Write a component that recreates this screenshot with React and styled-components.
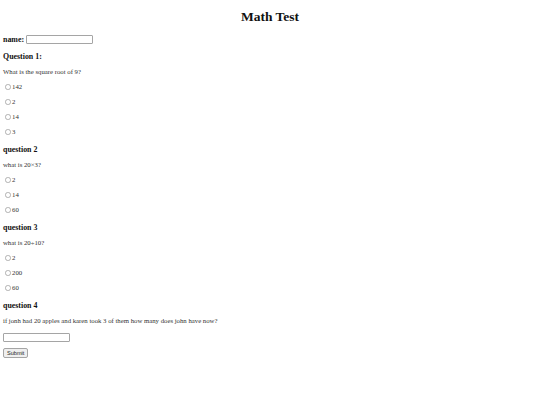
import React from "react";
import styled, { createGlobalStyle } from "styled-components";

const GlobalStyle = createGlobalStyle`
  html, body {
    margin: 0;
    padding: 0;
    background: #ffffff;
  }
  body {
    font-family: "Liberation Serif", "Times New Roman", serif;
    color: #000000;
  }
`;

const Page = styled.div`
  display: flex;
  flex-direction: column;
  align-items: flex-start;
  padding: 0 3px;
  color: #000;
  font-family: "Liberation Serif", "Times New Roman", serif;
`;

const Title = styled.h1`
  align-self: stretch;
  margin: 9px 0 0;
  text-align: center;
  font-size: 13.5px;
  line-height: 15px;
  height: 15px;
  font-weight: bold;
  color: #111;
`;

const NameRow = styled.label`
  display: flex;
  align-items: center;
  gap: 2px;
  margin-top: 10px;
  height: 10px;
  font-size: 7.9px;
  font-weight: bold;
  color: #111;
`;

const TextInput = styled.input`
  box-sizing: border-box;
  width: ${(p) => p.$width || 67}px;
  height: 9px;
  padding: 0 1px;
  margin: 0;
  border: 1px solid #a5a5a5;
  border-radius: 1px;
  font-family: "Liberation Sans", Arial, sans-serif;
  font-size: 6px;
  background: #fff;
  outline: none;
`;

const Heading = styled.h3`
  margin: ${(p) => p.$gap || 7.5}px 0 0;
  height: 9px;
  line-height: 9px;
  font-size: 7.9px;
  font-weight: bold;
  color: #111;
`;

const Prompt = styled.p`
  margin: 7.5px 0 0;
  height: 8px;
  line-height: 8px;
  font-size: 6.75px;
  color: #333;
`;

const Option = styled.label`
  display: flex;
  align-items: center;
  gap: 1.5px;
  margin-top: 7px;
  height: 8px;
  font-family: "Liberation Serif", "Times New Roman", serif;
  font-size: 6.75px;
  line-height: 8px;
  color: #333;
`;

const Radio = styled.span`
  box-sizing: border-box;
  width: 5.5px;
  height: 5.5px;
  margin-left: 2px;
  border: 0.6px solid #b0b0b0;
  border-radius: 50%;
  background: #fff;
`;

const AnswerRow = styled.div`
  margin-top: 8px;
  display: flex;
`;

const SubmitButton = styled.button`
  box-sizing: border-box;
  margin-top: 6px;
  height: 10px;
  padding: 0 3px;
  font-family: "Liberation Sans", Arial, sans-serif;
  font-size: 5.6px;
  line-height: 8px;
  color: #222;
  background: #efefef;
  border: 1px solid #a5a5a5;
  border-radius: 2px;
`;

const questions = [
  {
    title: "Question 1:",
    prompt: "What is the square root of 9?",
    options: ["142", "2", "14", "3"],
    gap: 7.5,
  },
  {
    title: "question 2",
    prompt: "what is 20\u00d73?",
    options: ["2", "14", "60"],
    gap: 8.5,
  },
  {
    title: "question 3",
    prompt: "what is 20\u00f710?",
    options: ["2", "200", "60"],
    gap: 8.5,
  },
];

export default function App() {
  return (
    <>
      <GlobalStyle />
      <Page>
        <Title>Math Test</Title>
        <NameRow>
          name: <TextInput type="text" />
        </NameRow>
        {questions.map((q) => (
          <React.Fragment key={q.title}>
            <Heading $gap={q.gap}>{q.title}</Heading>
            <Prompt>{q.prompt}</Prompt>
            {q.options.map((o) => (
              <Option key={o}>
                <Radio />
                {o}
              </Option>
            ))}
          </React.Fragment>
        ))}
        <Heading $gap={8.5}>question 4</Heading>
        <Prompt>
          if jonh had 20 apples and karen took 3 of them how many does john
          have now?
        </Prompt>
        <AnswerRow>
          <TextInput type="text" />
        </AnswerRow>
        <SubmitButton type="button">Submit</SubmitButton>
      </Page>
    </>
  );
}
